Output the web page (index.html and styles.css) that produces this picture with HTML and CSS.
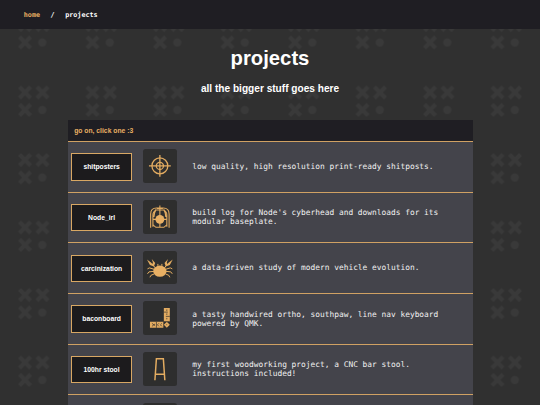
FILE: index.html
```html
<!DOCTYPE html>
<html lang="en">
<head>
<meta charset="utf-8">
<title>projects</title>
<link rel="stylesheet" href="styles.css">
</head>
<body>
<svg class="backdrop" aria-hidden="true">
  <defs>
    <pattern id="tile" width="67.5" height="67.5" patternUnits="userSpaceOnUse">
      <path d="M19.500 19.500l11 11m0-11l-11 11M37 19.500l11 11m0-11l-11 11M19.500 37l11 11m0-11l-11 11" stroke="#393939" stroke-width="4" fill="none"/>
      <circle cx="42.300" cy="42.500" r="4.100" fill="#393939"/>
    </pattern>
  </defs>
  <rect width="100%" height="100%" fill="url(#tile)"/>
</svg>
<nav class="nav"><a class="home">home</a><span>/</span><span>projects</span></nav>
<main>
  <h1>projects</h1>
  <h2>all the bigger stuff goes here</h2>
  <section class="list">
    <div class="head">go on, click one :3</div>
    <div class="row">
      <a class="btn">shitposters</a>
      <div class="icon"><svg viewBox="0 0 34 34"><g fill="none" stroke="#e3ac61" stroke-width="1.3"><circle cx="17" cy="17" r="8"/><circle cx="17" cy="17" r="3.6"/><path d="M17 6v22M6 17h22"/></g></svg></div>
      <p>low quality, high resolution print-ready shitposts.</p>
    </div>
    <div class="row">
      <a class="btn">Node_irl</a>
      <div class="icon"><svg viewBox="0 0 34 34"><g fill="none" stroke="#e3ac61" stroke-width="1.1"><path d="M7.700 28V14q0-6 6-6h6.600q6 0 6 6v14"/><path d="M10 27V15q0-3 3-5h8q3 2 3 5v12M13 10q-2 3-2 7M21 10q2 3 2 7"/><path d="M17 5.500V28M10 19.500h14M10 25l3 2.500h8l3-2.500M14 8.500h6"/></g><circle cx="17" cy="19.500" r="4.500" fill="#e9b064"/></svg></div>
      <p>build log for Node's cyberhead and downloads for its modular baseplate.</p>
    </div>
    <div class="row">
      <a class="btn">carcinization</a>
      <div class="icon"><svg viewBox="0 0 34 34"><ellipse cx="17" cy="20.300" rx="6.700" ry="5.700" fill="#e9b064"/><g fill="none" stroke="#e3ac61" stroke-width="1"><path d="M12.500 17l-3-3.500M21.500 17l3-3.500M11.500 18.500l-5-1.500-2 1M22.500 18.500l5-1.500 2 1M11 20.500l-5 .5-1.500 2M23 20.500l5 .5 1.500 2M11.500 23l-3.500 1.500-1 2M22.500 23l3.500 1.500 1 2M15 15v-2M19 15v-2"/></g><path d="M11 15.500L7 14 4 8.500l4 3L9.500 13l.5-1.500L8.800 8l3.500 4zM23 15.500l4-1.500 3-5.500-4 3-1.500 1.500-.5-1.500L25.200 8l-3.500 4z" fill="#e3ac61"/></svg></div>
      <p>a data-driven study of modern vehicle evolution.</p>
    </div>
    <div class="row">
      <a class="btn">baconboard</a>
      <div class="icon"><svg viewBox="0 0 34 34"><path d="M21 7h6v14h-6zM7 21h13.500v6H7z" fill="#e3ac61"/><path d="M24 21l3 3-3 3-3-3z" fill="#e3ac61"/><path d="M21 11.200h4M23 15.500h4M24 8.500v1.500M24 12.500v1.500M24 17v1.500M9 22.500l2 1.500-2 1.500M13.500 21v6M16 22.500l-1.500 1.500 1.500 1.500M19 22.500l-1.500 1.500 1.500 1.500M11.500 23v2M21 20.800h6" stroke="#2e2d2c" stroke-width=".7" fill="none"/><circle cx="24" cy="24" r=".5" fill="#2e2d2c"/></svg></div>
      <p>a tasty handwired ortho, southpaw, line nav keyboard powered by QMK.</p>
    </div>
    <div class="row">
      <a class="btn">100hr stool</a>
      <div class="icon"><svg viewBox="0 0 34 34"><path d="M12 28.500L13.500 6.800h7L22 28.500M13 22.300h8" fill="none" stroke="#e3ac61" stroke-width="1.500"/></svg></div>
      <p>my first woodworking project, a CNC bar stool. instructions included!</p>
    </div>
    <div class="row">
      <a class="btn"></a>
      <div class="icon"></div>
      <p></p>
    </div>
  </section>
</main>
</body>
</html>
```
FILE: styles.css
```css
* { box-sizing: border-box; }
html, body { height: 100%; }
body {
  margin: 0;
  overflow: hidden;
  background: #303030;
  color: #fff;
  font-family: "Liberation Sans", Arial, sans-serif;
}
.backdrop {
  position: absolute;
  inset: 0;
  width: 100%;
  height: 100%;
  z-index: -1;
}
.nav {
  display: flex;
  align-items: center;
  gap: 10.5px;
  height: 29px;
  padding-left: 23.8px;
  background: #1f1e23;
  font: bold 6.75px "DejaVu Sans Mono", monospace;
}
.home { color: #e9b064; }
main {
  height: 376px;
  overflow: hidden;
}
h1 {
  margin: 17px 0 0;
  font-size: 20.25px;
  line-height: 24px;
  text-align: center;
}
h2 {
  margin: 13px 0 0;
  font-size: 10.125px;
  line-height: 12px;
  text-align: center;
}
.list {
  width: 405px;
  margin: 25px auto 0;
  background: #44444b;
}
.head {
  height: 21px;
  padding-left: 6.75px;
  background: #1f1e23;
  color: #e9b064;
  font-size: 6.75px;
  font-weight: bold;
  line-height: 21px;
}
.row {
  display: flex;
  align-items: center;
  height: 50.7px;
  padding-left: 3.75px;
  border-top: 1px solid #d0a163;
}
.btn {
  display: flex;
  align-items: center;
  justify-content: center;
  width: 60.75px;
  height: 27.4px;
  border: 1px solid #d8a764;
  background: #1c1b1d;
  font-size: 6.75px;
  font-weight: bold;
}
.icon {
  width: 33.75px;
  height: 33.75px;
  margin: 0 0 1.6px 11px;
  border-radius: 2.5px;
  background: #2e2e2e;
}
.icon svg {
  display: block;
  width: 100%;
  height: 100%;
}
.row p {
  width: 262px;
  margin: 0 0 .6px 15.5px;
  color: #f0f0f0;
  font: 7.875px/9px "DejaVu Sans Mono", monospace;
}
```
